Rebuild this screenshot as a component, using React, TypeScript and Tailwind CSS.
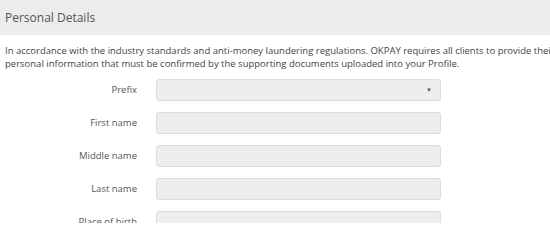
const fields = ['First name', 'Middle name', 'Last name', 'Place of birth'];

function Row({ label, children }: { label: string; children: React.ReactNode }) {
  return (
    <div className="flex items-center h-[22px]">
      <label className="w-[137px] shrink-0 text-right text-[9.5px] text-[#555]">{label}</label>
      <div className="ml-[19px] w-[285px] shrink-0">{children}</div>
    </div>
  );
}

export default function App() {
  return (
    <div
      className="w-[550px] h-[223px] overflow-hidden bg-white"
      style={{ fontFamily: '"Open Sans", "Liberation Sans", sans-serif' }}
    >
      <div className="flex h-[35px] items-center bg-[#ececec] px-[5px] text-[12px] text-[#555]">
        Personal Details
      </div>
      <p className="mt-[10px] whitespace-nowrap px-[5px] text-[9.5px] leading-[12.5px] text-[#444]">
        In accordance with the industry standards and anti-money laundering regulations. OKPAY requires all clients to provide their
        <br />
        personal information that must be confirmed by the supporting documents uploaded into your Profile.
      </p>
      <div className="mt-[9px] flex flex-col gap-[11px]">
        <Row label="Prefix">
          <div className="flex h-[22px] items-center justify-end rounded-[3px] border border-[#dcdcdc] bg-[#eeeeee] pr-[8px]">
            <span className="text-[6px] text-[#555]">▼</span>
          </div>
        </Row>
        {fields.map((f) => (
          <Row key={f} label={f}>
            <div className="h-[22px] rounded-[3px] border border-[#dcdcdc] bg-[#eeeeee]" />
          </Row>
        ))}
      </div>
    </div>
  );
}
